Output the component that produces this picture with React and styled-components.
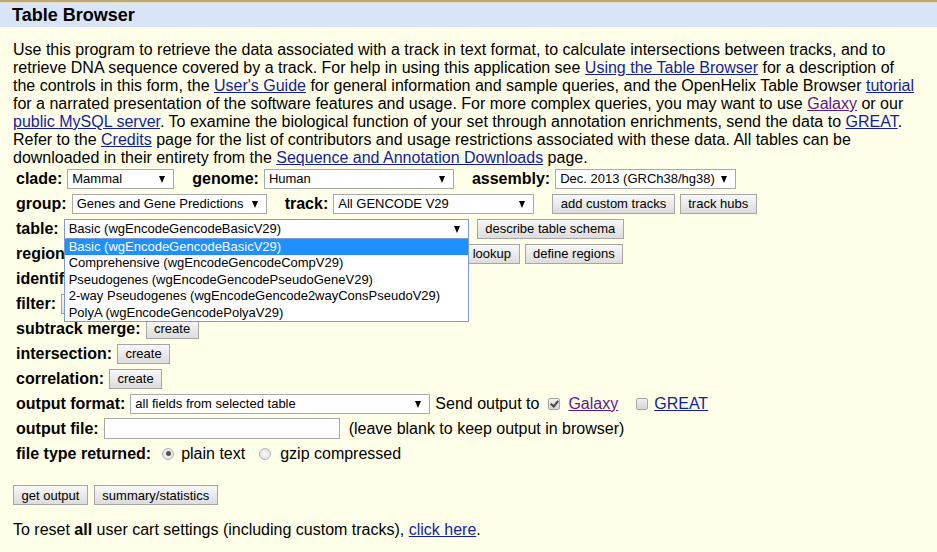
import React from "react";
import styled, { createGlobalStyle } from "styled-components";

const GlobalStyle = createGlobalStyle`
  html, body {
    margin: 0;
    padding: 0;
    background: #fffee8;
  }
  body {
    font-family: "Liberation Sans", Arial, sans-serif;
    color: #000;
  }
`;

const tableOptions = [
  "Basic (wgEncodeGencodeBasicV29)",
  "Comprehensive (wgEncodeGencodeCompV29)",
  "Pseudogenes (wgEncodeGencodePseudoGeneV29)",
  "2-way Pseudogenes (wgEncodeGencode2wayConsPseudoV29)",
  "PolyA (wgEncodeGencodePolyaV29)",
];

function Select({ width, value, focused, options }) {
  return (
    <SelectBox $width={width} $focused={focused}>
      <span>{value}</span>
      <Arrow />
      {options && (
        <Menu>
          {React.Children.toArray(
            options.map((opt, i) => <MenuItem $active={i === 0}>{opt}</MenuItem>)
          )}
        </Menu>
      )}
    </SelectBox>
  );
}

export default function App() {
  return (
    <Page>
      <GlobalStyle />
      <TopRule />
      <Header>
        <h1>Table Browser</h1>
      </Header>
      <Content>
        <Intro>
          Use this program to retrieve the data associated with a track in text format, to calculate intersections between tracks, and to
          <br />
          retrieve DNA sequence covered by a track. For help in using this application see <Link>Using the Table Browser</Link> for a description of
          <br />
          the controls in this form, the <Link>User's Guide</Link> for general information and sample queries, and the OpenHelix Table Browser <Link>tutorial</Link>
          <br />
          for a narrated presentation of the software features and usage. For more complex queries, you may want to use <Link $visited>Galaxy</Link> or our
          <br />
          <Link>public MySQL server</Link>. To examine the biological function of your set through annotation enrichments, send the data to <Link>GREAT</Link>.
          <br />
          Refer to the <Link>Credits</Link> page for the list of contributors and usage restrictions associated with these data. All tables can be
          <br />
          downloaded in their entirety from the <Link>Sequence and Annotation Downloads</Link> page.
        </Intro>

        <Form>
          <Row $h={24}>
            <Field>
              <Label>clade:</Label>
              <Select width={107} value="Mammal" />
            </Field>
            <Field>
              <Label>genome:</Label>
              <Select width={190} value="Human" />
            </Field>
            <Field>
              <Label>assembly:</Label>
              <Select width={181} value="Dec. 2013 (GRCh38/hg38)" />
            </Field>
          </Row>
          <Row>
            <Field>
              <Label>group:</Label>
              <Select width={195} value="Genes and Gene Predictions" />
            </Field>
            <Field>
              <Label>track:</Label>
              <Select width={201} value="All GENCODE V29" />
            </Field>
            <Buttons>
              <Button>add custom tracks</Button>
              <Button>track hubs</Button>
            </Buttons>
          </Row>
          <Row $top>
            <Field $gap={8}>
              <Field>
                <Label>table:</Label>
                <Select width={405} value={tableOptions[0]} focused options={tableOptions} />
              </Field>
              <Button>describe table schema</Button>
            </Field>
          </Row>
          <Row>
            <Field>
              <Label>region:</Label>
              <Radio $checked />
              <Plain>genome</Plain>
              <Radio />
              <Plain>position</Plain>
              <TextInput $width={211} />
              <Button>lookup</Button>
              <Button>define regions</Button>
            </Field>
          </Row>
          <Row>
            <Field>
              <Label>identifiers (names/accessions):</Label>
              <Button>paste list</Button>
              <Button>upload list</Button>
            </Field>
          </Row>
          <Row>
            <Field>
              <Label>filter:</Label>
              <Button>create</Button>
            </Field>
          </Row>
          <Row>
            <Field>
              <Label>subtrack merge:</Label>
              <Button>create</Button>
            </Field>
          </Row>
          <Row>
            <Field>
              <Label>intersection:</Label>
              <Button>create</Button>
            </Field>
          </Row>
          <Row>
            <Field>
              <Label>correlation:</Label>
              <Button>create</Button>
            </Field>
          </Row>
          <Row>
            <Field>
              <Label>output format:</Label>
              <Select width={300} value="all fields from selected table" />
              <Plain>Send output to</Plain>
              <Check $checked $left={4} $right={3} />
              <Link $visited>Galaxy</Link>
              <Check $left={13} $right={1} />
              <Link>GREAT</Link>
            </Field>
          </Row>
          <Row>
            <Field>
              <Label>output file:</Label>
              <TextInput $width={236} />
              <Plain $pad={4}>(leave blank to keep output in browser)</Plain>
            </Field>
          </Row>
          <Row>
            <Field>
              <Label>file type returned:</Label>
              <Radio $checked />
              <Plain>plain text</Plain>
              <Radio $left={9} />
              <Plain $pad={2}>gzip compressed</Plain>
            </Field>
          </Row>
        </Form>

        <Actions>
          <Button>get output</Button>
          <Button>summary/statistics</Button>
        </Actions>

        <Reset>
          To reset <b>all</b> user cart settings (including custom tracks), <Link>click here</Link>.
        </Reset>
      </Content>
    </Page>
  );
}

const Page = styled.div`
  min-height: 552px;
  background: #fffee8;
`;

const TopRule = styled.div`
  height: 3px;
  background: linear-gradient(#b9a777 0 2px, #e9dfbd 2px 3px);
`;

const Header = styled.div`
  height: 24px;
  background: #d9e4f8;
  display: flex;
  align-items: center;
  padding-left: 12px;
  h1 {
    margin: 0;
    font-size: 18px;
    font-weight: bold;
    line-height: 24px;
  }
`;

const Content = styled.div`
  padding: 0 13px;
`;

const Intro = styled.p`
  margin: 14px 0 0;
  font-size: 16px;
  line-height: 18px;
  white-space: nowrap;
`;

const Link = styled.a`
  color: ${(p) => (p.$visited ? "#5c1a8c" : "#121e9a")};
  text-decoration: underline;
  cursor: pointer;
`;

const Form = styled.div`
  display: flex;
  flex-direction: column;
  padding-left: 3px;
`;

const Row = styled.div`
  display: flex;
  align-items: center;
  gap: 18px;
  height: ${(p) => p.$h || 25}px;
  font-size: 16px;
  position: relative;
  z-index: ${(p) => (p.$top ? 5 : 1)};
`;

const Field = styled.div`
  display: flex;
  align-items: center;
  gap: ${(p) => (p.$gap ?? 5)}px;
`;

const Buttons = styled.div`
  display: flex;
  align-items: center;
  gap: 5px;
`;

const Label = styled.span`
  font-weight: bold;
  font-size: 16px;
  white-space: nowrap;
`;

const Plain = styled.span`
  font-size: 16px;
  white-space: nowrap;
  padding-left: ${(p) => p.$pad || 0}px;
`;

const SelectBox = styled.div`
  position: relative;
  box-sizing: border-box;
  width: ${(p) => p.$width}px;
  height: 20px;
  background: #fff;
  border: 1px solid ${(p) => (p.$focused ? "#7a9cd3" : "#a9a9a9")};
  font-size: 13px;
  line-height: 18px;
  padding-left: 4px;
  white-space: nowrap;
  display: flex;
  align-items: center;
`;

const Arrow = styled.i`
  position: absolute;
  right: 8px;
  top: 6px;
  width: 0;
  height: 0;
  border-left: 3.5px solid transparent;
  border-right: 3.5px solid transparent;
  border-top: 7px solid #000;
`;

const Menu = styled.div`
  position: absolute;
  left: -1px;
  right: -1px;
  top: 18px;
  background: #fff;
  border: 1px solid #7a9cd3;
  z-index: 10;
`;

const MenuItem = styled.div`
  height: 16.6px;
  line-height: 16.6px;
  padding-left: 4px;
  font-size: 13px;
  color: ${(p) => (p.$active ? "#fff" : "#000")};
  background: ${(p) => (p.$active ? "#1e90ff" : "transparent")};
`;

const Button = styled.button`
  box-sizing: border-box;
  height: 20px;
  padding: 0 7.5px;
  font-family: "Liberation Sans", Arial, sans-serif;
  font-size: 13px;
  color: #000;
  background: linear-gradient(#f8f8f8, #dcdcdc);
  border: 1px solid #a6a6a6;
  border-radius: 0;
  white-space: nowrap;
`;

const TextInput = styled.div`
  box-sizing: border-box;
  width: ${(p) => p.$width}px;
  height: 21px;
  background: #fff;
  border: 1px solid #a9a9a9;
`;

const Radio = styled.span`
  box-sizing: border-box;
  width: 12px;
  height: 12px;
  border-radius: 50%;
  border: 1px solid #b5b5b5;
  background: radial-gradient(circle, #fafafa, #dadada);
  margin: 0 2px 0 ${(p) => p.$left ?? 6}px;
  position: relative;
  &::after {
    content: "";
    display: ${(p) => (p.$checked ? "block" : "none")};
    position: absolute;
    left: 2.5px;
    top: 2.5px;
    width: 5px;
    height: 5px;
    border-radius: 50%;
    background: #555;
  }
`;

const Check = styled.span`
  box-sizing: border-box;
  width: 12px;
  height: 12px;
  border: 1px solid #a8a8a8;
  border-radius: 2px;
  background: linear-gradient(#f0f0f0, #d4d4d4);
  margin: 0 ${(p) => p.$right}px 0 ${(p) => p.$left}px;
  position: relative;
  &::after {
    content: "";
    display: ${(p) => (p.$checked ? "block" : "none")};
    position: absolute;
    left: 3px;
    top: 0px;
    width: 3px;
    height: 6px;
    border: solid #444;
    border-width: 0 2px 2px 0;
    transform: rotate(40deg);
  }
`;

const Actions = styled.div`
  display: flex;
  gap: 6px;
  margin-top: 19px;
`;

const Reset = styled.p`
  margin: 16px 0 0;
  font-size: 16px;
  line-height: 18px;
`;
